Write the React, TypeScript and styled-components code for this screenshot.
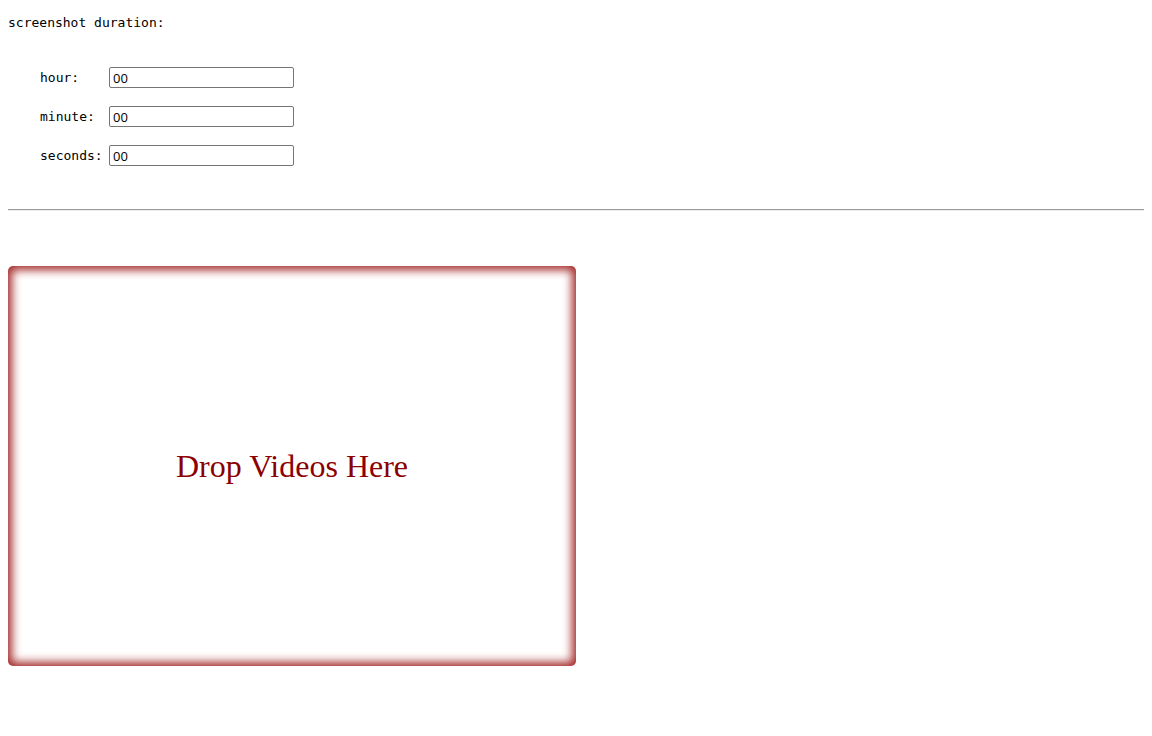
import React, { useState } from 'react'
import styled, { createGlobalStyle } from 'styled-components'

const GlobalStyle = createGlobalStyle`
  body {
    margin: 8px;
    background: #fff;
    font-family: "DejaVu Sans Mono", monospace;
    font-size: 13px;
    color: #000;
  }
`

const Settings = styled.div`
  padding-top: 7px;
`

const Heading = styled.div`
  line-height: 15px;
`

const DurationGrid = styled.div`
  display: grid;
  grid-template-columns: 69px 185px;
  row-gap: 18px;
  align-items: center;
  margin: 37px 0 0 32px;
`

const Label = styled.label`
  line-height: 15px;
`

const TimeInput = styled.input`
  box-sizing: border-box;
  width: 185px;
  height: 21px;
  padding: 1px 3px;
  border: 1px solid #767676;
  border-radius: 2px;
  font-family: "Open Sans", sans-serif;
  font-size: 13px;
  color: #000;
  outline: none;
`

const Divider = styled.hr`
  margin: 43px 0 0;
  border: none;
  border-top: 1px solid #9a9a9a;
  border-bottom: 1px solid #eeeeee;
`

const DropZone = styled.div`
  width: 568px;
  height: 400px;
  margin-top: 55px;
  border-radius: 5px;
  box-shadow: inset 0 0 10px 4px #a52a2a;
  display: flex;
  align-items: center;
  justify-content: center;
  font-family: "Liberation Serif", serif;
  font-size: 32px;
  color: #8b0000;
`

const fields = ['hour', 'minute', 'seconds']

export default function App() {
  const [values, setValues] = useState<Record<string, string>>({ hour: '00', minute: '00', seconds: '00' })
  return (
    <>
      <GlobalStyle />
      <Settings>
        <Heading>screenshot duration:</Heading>
        <DurationGrid>
          {fields.map((f) => (
            <React.Fragment key={f}>
              <Label htmlFor={f}>{f}:</Label>
              <TimeInput
                id={f}
                type="text"
                value={values[f]}
                onChange={(e) => setValues({ ...values, [f]: e.target.value })}
              />
            </React.Fragment>
          ))}
        </DurationGrid>
      </Settings>
      <Divider />
      <DropZone>Drop Videos Here</DropZone>
    </>
  )
}
